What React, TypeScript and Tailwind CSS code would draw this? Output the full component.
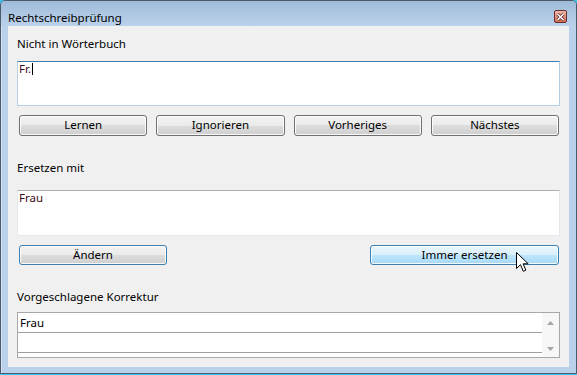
const btnBase =
  "flex items-center justify-center rounded-[3px] border text-[11.5px] leading-[16px] text-black shadow-[inset_0_0_0_1px_rgba(255,255,255,0.85)]";
const btnNormal =
  "border-[#707070] bg-[linear-gradient(#f2f2f2,#ebebeb_50%,#dddddd_50%,#cfcfcf)]";

function Button({ label, className }: { label: string; className?: string }) {
  return (
    <button className={`${btnBase} ${btnNormal} h-[21px] pb-[2px] ${className ?? ""}`}>
      {label}
    </button>
  );
}

function Arrow({ up }: { up?: boolean }) {
  return (
    <svg width="7" height="4" viewBox="0 0 7 4" className="block">
      <path d={up ? "M0 4 L3.5 0 L7 4 Z" : "M0 0 L7 0 L3.5 4 Z"} fill="#a6a6a6" />
    </svg>
  );
}

export default function App() {
  return (
    <div className="h-[375px] w-[577px] overflow-hidden bg-[#38c2ec] font-['Noto_Sans',sans-serif] text-[11.5px] text-black">
      {/* window */}
      <div className="relative flex h-[374px] w-[577px] flex-col rounded-t-[5px] border border-[#4c5b6b] bg-[#b9d1ea] shadow-[inset_0_1px_0_0_rgba(255,255,255,0.5),inset_1px_0_0_0_rgba(255,255,255,0.4)]">
        {/* title bar */}
        <div className="flex h-[25px] items-start justify-between rounded-t-[4px] bg-[linear-gradient(#9fbad8,#b1c9e4_60%,#bad1ea)] pl-[7px] pr-[9px]">
          <span className="mt-[9px] leading-[16px]">Rechtschreibprüfung</span>
          <div className="mt-[9px] flex h-[13px] w-[13px] items-center justify-center rounded-[2px] border border-[#6a2f28] bg-[linear-gradient(#f1b8aa,#e09080_50%,#cf6a57)]">
            <svg width="9" height="8" viewBox="0 0 9 8">
              <path d="M1.5 1 L7.5 7 M7.5 1 L1.5 7" stroke="#5a2a24" strokeWidth="3" />
              <path d="M1.5 1 L7.5 7 M7.5 1 L1.5 7" stroke="#ffffff" strokeWidth="1.5" />
            </svg>
          </div>
        </div>

        {/* client area */}
        <div className="px-[7px]">
          <div className="flex h-[341px] flex-col bg-[#f0f0f0] px-[9px] pt-[10px]">
            <span className="leading-[16px]">Nicht in Wörterbuch</span>
            <div className="mt-[9px] h-[45px] border border-[#b5cfe7] border-t-[#3d7bad] bg-white pl-[1px] leading-[14px] text-[#3e0b18]">
              Fr.
              <span className="ml-px inline-block h-[12px] w-px bg-black align-[-2px]" />
            </div>

            <div className="mt-[9px] grid grid-cols-4 gap-[9px] pl-[2px] pr-[1px]">
              <Button label="Lernen" />
              <Button label="Ignorieren" />
              <Button label="Vorheriges" />
              <Button label="Nächstes" />
            </div>

            <span className="mt-[24px] leading-[16px]">Ersetzen mit</span>
            <div className="mt-[14px] h-[46px] border border-[#e3e9ef] border-t-[#abadb3] bg-white pl-[1px] leading-[14px] text-[#3e0b18]">
              Frau
            </div>

            <div className="mt-[9px] flex justify-between pl-[2px] pr-[1px]">
              <button
                className={`${btnBase} h-[20px] w-[148px] pb-[1px] border-[#3c7fb1] bg-[linear-gradient(#f2f2f2,#ebebeb_50%,#dddddd_50%,#cfcfcf)] shadow-[inset_0_0_0_1px_#cdeefc]`}
              >
                Ändern
              </button>
              <button
                className={`${btnBase} h-[20px] w-[189px] pb-[1px] border-[#3c7fb1] bg-[linear-gradient(#eaf6fd,#d9f0fc_50%,#bee6fd_50%,#a7d9f5)]`}
              >
                Immer ersetzen
              </button>
            </div>

            <span className="mt-[24px] leading-[16px]">Vorgeschlagene Korrektur</span>
            <div className="mt-[7px] flex h-[46px] border border-[#a8a8a8] bg-white">
              <div className="flex-1">
                <div className="h-[20px] border-b border-[#a0a0a0] pl-[2px] leading-[19px]">Frau</div>
                <div className="h-[20px] border-b border-[#a0a0a0]" />
              </div>
              <div className="flex w-[17px] flex-col items-center justify-between bg-[#f7f7f7] pb-[6px] pt-[8px]">
                <Arrow up />
                <Arrow />
              </div>
            </div>
          </div>
        </div>

        {/* mouse pointer */}
        <svg
          width="14"
          height="21"
          viewBox="0 0 14 21"
          className="absolute left-[515px] top-[251px]"
        >
          <path
            d="M0.5 0.5 V16.5 L4.5 12.7 L7.3 19.3 L9.8 18.2 L7.1 11.8 H12.2 Z"
            fill="#ffffff"
            stroke="#000000"
            strokeWidth="1"
            strokeLinejoin="miter"
          />
        </svg>
      </div>
    </div>
  );
}
